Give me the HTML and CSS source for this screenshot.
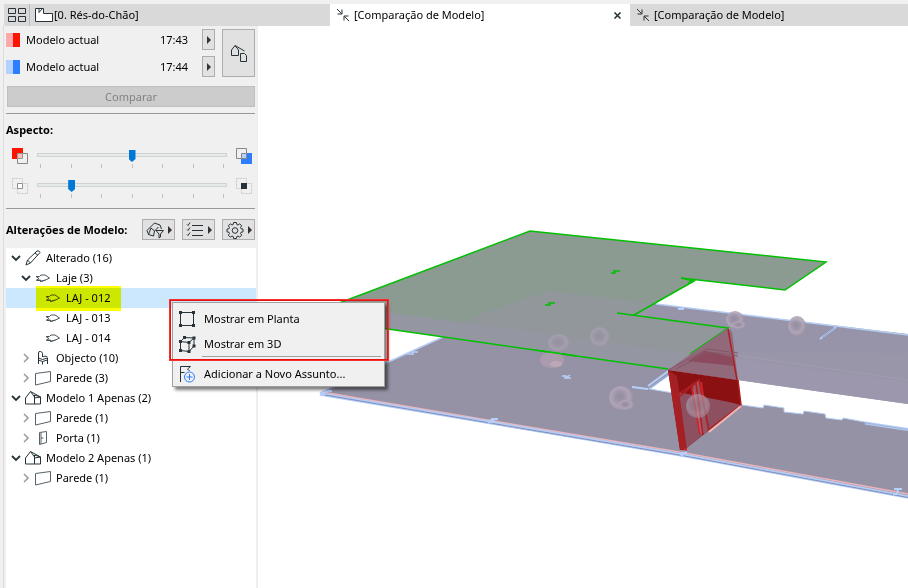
FILE: index.html
```html
<!DOCTYPE html>
<html lang="pt">
<head>
<meta charset="utf-8">
<title>Comparação de Modelo</title>
<link rel="stylesheet" href="styles.css">
</head>
<body>
<svg class="defs" width="0" height="0" aria-hidden="true">
  <defs>
    <symbol id="compress" viewBox="0 0 14 14"><path d="M1 1l4.500 4.500M6 1.500V6H1.500M13 13l-4.500-4.500M8 12.500V8h4.500"/></symbol>
    <symbol id="down" viewBox="0 0 12 12"><path d="M2 4l4 4 4-4" stroke-width="1.800"/></symbol>
    <symbol id="right" viewBox="0 0 12 12"><path d="M4 2l4 4-4 4" stroke="#999" stroke-width="1.500"/></symbol>
    <symbol id="pencil" viewBox="0 0 20 20"><path d="M4 17l1.500-5L15 3q2-1 3 1.500L8.500 15 4 17zM5.500 12l3 3M13 5l3 2.500"/></symbol>
    <symbol id="slab" viewBox="0 0 20 20"><path d="M4 8.500h3.500L9 7h4l4.500 3-4 2-5 1.500v-1.500H4.500L7 10.500z" stroke="#4a565c"/><path d="M4.500 12.500h4v1l5-1.500" stroke="#4a565c"/></symbol>
    <symbol id="chair" viewBox="0 0 20 20"><path d="M6.500 16V5q0-2 2-1.500t2 2V9M6.500 10l4 1.500 5-1.500v6M6.500 12l4 1.500v3M10.500 13.500L15.500 12M11 9l2-1 2.500 1"/></symbol>
    <symbol id="wall" viewBox="0 0 20 20"><path d="M3.500 5.500l15-2v10l-15 3.500z" stroke="#566268"/></symbol>
    <symbol id="door" viewBox="0 0 20 20"><path d="M7.500 4.500l7-1v11l-7 2zM9 4.500V16M9 10h2.500" stroke="#566268"/></symbol>
    <symbol id="house" viewBox="0 0 20 20"><path d="M3.500 16V10l5-6.500 4 5.500v7zM8.500 3.500L18.500 9v7h-6M12.500 10V7l6 2-6 1z"/></symbol>
    <radialGradient id="ball" cx="45%" cy="45%" r="60%"><stop offset="0" stop-color="#938b9f"/><stop offset=".35" stop-color="#a096aa"/><stop offset=".65" stop-color="#b3a7ba"/><stop offset="1" stop-color="#9a8d9e"/></radialGradient>
  </defs>
</svg>
<header class="tabs">
  <button class="grid" aria-label="Separadores"><svg width="20" height="16" viewBox="0 0 20 16"><path d="M1.500 1.500h7v5h-7zM11.500 1.500h7v5h-7zM1.500 9.500h7v5h-7zM11.500 9.500h7v5h-7z"/></svg></button>
  <button class="tab plan"><svg width="20" height="18" viewBox="0 0 20 18"><path d="M1.500 2.500h8v5h9v8h-17z" fill="#fff"/><path d="M5 2.500v4l3.500-4"/></svg>[0. Rés-do-Chão]</button>
  <div class="tab active"><svg width="14" height="14"><use href="#compress"/></svg><span>[Comparação de Modelo]</span><button class="close" aria-label="Fechar"><svg width="9" height="9" viewBox="0 0 9 9"><path d="M1.500 1.500l6 6M7.500 1.500l-6 6" stroke-width="1.600"/></svg></button></div>
  <button class="tab last"><svg width="14" height="14"><use href="#compress"/></svg>[Comparação de Modelo]</button>
</header>
<div class="workspace">
  <aside class="panel">
    <section class="models">
      <div class="model"><i class="swatch red"></i><span>Modelo actual</span><time>17:43</time><button class="btn small" aria-label="Escolher modelo 1"><i class="arrow"></i></button></div>
      <div class="model"><i class="swatch blue"></i><span>Modelo actual</span><time>17:44</time><button class="btn small" aria-label="Escolher modelo 2"><i class="arrow"></i></button></div>
      <button class="btn big" aria-label="Comparar modelos"><svg width="20" height="20" viewBox="0 0 20 20"><path d="M2.500 12.500V7L6 2.500 9.500 7v5.500zM6 2.500L15.500 8M11.500 18.500v-8h4l2 2v6z"/></svg></button>
    </section>
    <button class="btn compare" disabled>Comparar</button>
    <section class="aspect">
      <h2>Aspecto:</h2>
      <div class="slide">
        <svg width="16" height="16" viewBox="0 0 16 16"><path d="M0 0h11v11H0z" fill="#ff1200" stroke="none"/><path d="M5.500 5.500h10v10h-10z" fill="#f0f0f0" stroke="#888"/><path d="M5.500 5.500h5v5h-5z" fill="#f3c0bc" stroke="#999"/></svg>
        <div class="scale"><input type="range" min="0" max="6" value="3" aria-label="Equilíbrio entre modelos"><div class="ticks"><i></i><i></i><i></i><i></i><i></i><i></i><i></i></div></div>
        <svg width="16" height="16" viewBox="0 0 16 16"><path d="M5 5h11v11H5z" fill="#2d7dff" stroke="none"/><path d="M.500.500h10v10H.500z" fill="#f0f0f0" stroke="#888"/><path d="M5.500 5.500h5v5h-5z" fill="#b7d2fb" stroke="#888"/></svg>
      </div>
      <div class="slide">
        <svg width="16" height="16" viewBox="0 0 16 16"><path d="M.500.500h10v10H.500zM5.500 5.500h10v10h-10z" stroke="#c8c8c8" stroke-dasharray="2 1"/><path d="M5.500 5.500h5v5h-5z" fill="#fff" stroke="#8b9297"/></svg>
        <div class="scale"><input type="range" min="0" max="6" value="1" aria-label="Elementos sem alterações"><div class="ticks"><i></i><i></i><i></i><i></i><i></i><i></i><i></i></div></div>
        <svg width="16" height="16" viewBox="0 0 16 16"><path d="M.500.500h10v10H.500zM5.500 5.500h10v10h-10z" stroke="#c8c8c8" stroke-dasharray="2 1"/><path d="M5 5h6v6H5z" fill="#263238" stroke="none"/></svg>
      </div>
    </section>
    <div class="changes">
      <h2>Alterações de Modelo:</h2>
      <button class="btn tool" aria-label="Filtro"><svg width="20" height="18" viewBox="0 0 20 18"><path d="M3.500 13.500l-1.500-4L9.500 2 15 4l1.500 4M3.500 13.500l5 1.500 1-5-3.500-3M9.500 10l4-4M3.500 13.500L6 7M11 9.500h7.500l-3 3.500v3l-1.500 1v-4z"/></svg><i class="arrow"></i></button>
      <button class="btn tool" aria-label="Lista"><svg width="20" height="18" viewBox="0 0 20 18"><path d="M7 4.500h11M7 9.500h11M7 14.500h11M2 3.500l1 1 2-3M2 8.500l1 1 2-3M2 13.500l1 1 2-3"/></svg><i class="arrow"></i></button>
      <button class="btn tool" aria-label="Definições"><svg width="20" height="18" viewBox="0 0 20 18"><path d="M8.600 1.500h2.800l.4 2 1.200.5 1.700-1.200 2 2L15.500 6.500l.5 1.200 2 .4v2.800l-2 .4-.5 1.200 1.200 1.700-2 2L13 15l-1.200.5-.4 2H8.600l-.4-2L7 15l-1.700 1.200-2-2 1.200-1.700-.5-1.200-2-.4V8.100l2-.4.5-1.200-1.200-1.700 2-2L7 4l1.200-.5z"/><circle cx="10" cy="9.500" r="2.800"/></svg><i class="arrow"></i></button>
    </div>
    <ul class="tree">
      <li class="l1"><svg class="chev"><use href="#down"/></svg><svg class="ico"><use href="#pencil"/></svg>Alterado (16)</li>
      <li class="l2"><svg class="chev"><use href="#down"/></svg><svg class="ico"><use href="#slab"/></svg>Laje (3)</li>
      <li class="l3 selected"><svg class="ico"><use href="#slab"/></svg>LAJ - 012<i class="marker"></i></li>
      <li class="l3"><svg class="ico"><use href="#slab"/></svg>LAJ - 013</li>
      <li class="l3"><svg class="ico"><use href="#slab"/></svg>LAJ - 014</li>
      <li class="l2"><svg class="chev"><use href="#right"/></svg><svg class="ico"><use href="#chair"/></svg>Objecto (10)</li>
      <li class="l2"><svg class="chev"><use href="#right"/></svg><svg class="ico"><use href="#wall"/></svg>Parede (3)</li>
      <li class="l1"><svg class="chev"><use href="#down"/></svg><svg class="ico"><use href="#house"/></svg>Modelo 1 Apenas (2)</li>
      <li class="l2"><svg class="chev"><use href="#right"/></svg><svg class="ico"><use href="#wall"/></svg>Parede (1)</li>
      <li class="l2"><svg class="chev"><use href="#right"/></svg><svg class="ico"><use href="#door"/></svg>Porta (1)</li>
      <li class="l1"><svg class="chev"><use href="#down"/></svg><svg class="ico"><use href="#house"/></svg>Modelo 2 Apenas (1)</li>
      <li class="l2"><svg class="chev"><use href="#right"/></svg><svg class="ico"><use href="#wall"/></svg>Parede (1)</li>
    </ul>
  </aside>
  <main class="view">
    <svg class="scene" viewBox="258 26 650 562" preserveAspectRatio="xMinYMin slice" role="img" aria-label="Modelo 3D">
      <!-- lower slab -->
      <path d="M320 393L443 337 550 291 672 330 672 373 650 389 742 405 763 408 764 405 784 408 784 412 803 414 804 411 825 414 826 418 842 420 843 418 908 430V498L682 456 490 424z" fill="#9692a6"/>
      <path d="M650 389L742 405 763 408 764 405 784 408 784 412 803 414 804 411 825 414 826 418 842 420 843 418 908 430" stroke="#b5cdf5"/>
      <path d="M865 423L908 429.500" stroke="#b5cdf5" stroke-width="3"/>
      <path d="M865 423L908 429.500" stroke="#8fa3cb" stroke-width=".6"/>
      <path d="M320 393L443 337" stroke="#b5cdf5" stroke-width="1.500"/>
      <path d="M322 392L490 420.500 682 452.500 908 494" stroke="#eeb4b9" stroke-width="1.500"/>
      <path d="M320 394L490 422.500 682 455 908 497" stroke="#b5cdf5" stroke-width="3.500"/>
      <path d="M325 395L490 423 682 455.500 908 497.500" stroke="#7f8fbd"/>
      <path d="M320 394l8-3h4M488 423l4-4h6M494 420l-3 3M682 456l-1-2 6-2M684 452l-3 5M894 489h8M898 489l-1 5h-4" stroke="#b5d0fb" stroke-width="2"/>
      <!-- upper slab -->
      <path d="M550 291L656 304 908 335V404L738 380 668 370 600 350z" fill="#9a96aa"/>
      <path d="M656 304L728 313 908 334V353L690 352 617 340z" fill="#9793a8"/>
      <path d="M690 352L738 359 908 382V404L738 380 668 370z" fill="#9c97ac"/>
      <path d="M656 304L908 335" stroke="#b5cdf5" stroke-width="1.500"/>
      <path d="M735 355L908 380" stroke="#a19caf"/>
      <path d="M678 309h6M632 387l16 2M649 389L677 369M648 386L674 367M820 339L836 327" stroke="#b5d0fb" stroke-width="2"/>
      <path d="M650 388L675 370M822 338L834 328" stroke="#8f9abd"/>
      <!-- green slab -->
      <path d="M302 317L530 231 826 262 785 290 681 278 694 281 634 315 617 313 728 328 668 369 388 329z" fill="#8b9b92"/>
      <path d="M440 336L484 313 550 291 656 304 634 315 617 313 728 328 668 369z" fill="#91979b"/>
      <path d="M384 312L480 325 691 354 668 369 388 329z" fill="#9497a2"/>
      <path d="M388 329L302 317 530 231 826 262 785 290 681 278M694 281L634 315M617 313L728 328 690 354M388 329L668 369" stroke="#00c000" stroke-width="1.500"/>
      <path d="M681 278l13 3-6 2M611 273h4l-1-2h6M545 305h5l-1-2h6" stroke="#00c000" stroke-width="1.500"/>
      <path d="M562 376h4l-1 2h6M570 375l-4 3M407 354h6l-1-2h6" stroke="#b5d0fb" stroke-width="1.500"/>
      <!-- red wall -->
      <path d="M668 370L728 328 732 332 738 380z" fill="#91697b"/>
      <path d="M668 370L738 380 741 405 684 450 680 450z" fill="#8a1011"/>
      <path d="M673 391L729 402 741 405 684 450z" fill="#8c5060"/>
      <path d="M688 361L734 366 732 357 705 351z" fill="#8b4a5d"/>
      <path d="M668 370L677 376 687 450 680 450z" fill="#a22026"/>
      <path d="M692 384l7-4 8 52-5 4z" fill="#9b5564"/>
      <path d="M670 373L682 448M674 397L699 380 709 430M675 400L696 383 703 435M738 380L741 405 708 430M728 329L737 380" stroke="#b01e1f" stroke-width="1.500"/>
      <path d="M692 388L700 434M701 382L704 402" stroke="#d0242a" stroke-width="2"/>
      <path d="M694 390L701 433" stroke="#b66975"/>
      <path d="M741 406L709 432" stroke="#f2b5b5" stroke-width="2"/>
      <path d="M684 449l3 1" stroke="#d22" stroke-width="2"/>
      <path d="M668 370L707 349 738 353M676 369L709 352 738 356" stroke="#865568"/>
      <!-- fixtures -->
      <g fill="url(#ball)">
        <g opacity=".9"><circle cx="735" cy="320" r="9"/><ellipse cx="739" cy="325" rx="7" ry="4"/><ellipse cx="797" cy="326" rx="9" ry="10"/><circle cx="621" cy="398" r="12"/><ellipse cx="626" cy="405" rx="8" ry="5"/></g>
        <g opacity=".55"><ellipse cx="600" cy="337" rx="10" ry="10"/><ellipse cx="559" cy="343" rx="11" ry="9"/><ellipse cx="698" cy="406" rx="12" ry="12"/></g>
        <ellipse cx="552" cy="360" rx="12" ry="8" fill="#ab9cad"/><ellipse cx="556" cy="364" rx="6" ry="3" fill="#bda8b7"/>
      </g>
      <path d="M535 350L577 356" stroke="#00c000" stroke-width="1.500"/>
    </svg>
  </main>
</div>
<div class="menu" role="menu">
  <button role="menuitem"><svg width="18" height="18" viewBox="0 0 18 18"><path d="M2.500 2.500h13v13h-13z"/><path d="M1 1h3v3H1zM14 1h3v3h-3zM1 14h3v3H1zM14 14h3v3h-3z" class="solid"/></svg>Mostrar em Planta</button>
  <button role="menuitem"><svg width="18" height="18" viewBox="0 0 18 18"><path d="M2.500 6.500l8.500 1v9l-8.500-1zM2.500 6.500l4-4 9.500.5-5 4.500M16 3v8l-5 5.500"/><path d="M1 5h3v3H1zM9.500 6h3v3h-3zM9.500 15h3v3h-3zM1 14h3v3H1zM5 1h3v3H5zM14.500 1.500h3v3h-3zM14.500 9.500h3v3h-3z" class="solid"/></svg>Mostrar em 3D</button>
  <hr>
  <button role="menuitem"><svg width="18" height="18" viewBox="0 0 18 18"><path d="M2.500 17V1.500h10L9.500 4l2 2M2.500 7.500h4"/><circle cx="11.500" cy="12" r="5" stroke="#2d7dff" fill="#f0f0f0"/><path d="M11.500 9v6M8.500 12h6" stroke="#2d7dff"/></svg>Adicionar a Novo Assunto...</button>
  <i class="frame"></i>
</div>
</body>
</html>
```
FILE: styles.css
```css
* { box-sizing: border-box; }
html, body { height: 100%; }
body {
  margin: 0;
  padding: 4px 0 0 4px;
  display: flex;
  flex-direction: column;
  overflow: hidden;
  background: #f0f0f0;
  color: #000;
  font: 11px/20px "Noto Sans", "Open Sans", sans-serif;
}
button { font: inherit; color: inherit; margin: 0; padding: 0; border: 0; background: none; text-align: left; }
svg { display: block; flex: none; fill: none; stroke: #263238; }
.defs { position: absolute; }
h2 { margin: 0; font-size: 11px; line-height: 20px; font-weight: 700; }

.tabs { display: flex; flex: none; height: 22px; background: #d9d9d9; }
.grid { width: 26px; padding-left: 3px; border-right: 1px solid #bbb; }
.tab { display: flex; align-items: center; gap: 4px; padding-left: 6px; width: 300px; }
.plan { gap: 0; padding-left: 4px; }
.active { background: #fff; }
.active span { flex: 1; }
.last { flex: 1; }
.close { padding: 0 8px; }

.workspace { display: flex; flex: 1; min-height: 0; }
.panel { display: flex; flex-direction: column; flex: none; width: 255px; margin-left: -1px; padding: 3px 0 0 2px; border-left: 1px solid #ddd; border-right: 2px solid #eee; }
.models { display: grid; grid-template-columns: 1fr 33px; grid-template-rows: 21px 21px; gap: 6px 7px; padding-right: 1px; }
.model { display: flex; align-items: center; }
.model span { flex: 1; padding-left: 6px; }
.model time { padding-right: 14px; }
.swatch { width: 14px; height: 14px; }
.red { background: linear-gradient(90deg, #ffaaaa 50%, #ff1200 50%); }
.blue { background: linear-gradient(90deg, #b3d1ff 50%, #2d7dff 50%); }
.btn { display: flex; align-items: center; justify-content: center; border: 1px solid #adadad; background: #e1e1e1; }
.small { width: 13px; height: 21px; }
.big { grid-column: 2; grid-row: 1 / 3; }
.arrow { border-left: 4px solid #333; border-top: 4px solid transparent; border-bottom: 4px solid transparent; }
.compare { height: 21px; margin: 9px 1px 0; background: #ccc; border-color: #bfbfbf; color: #838383; }
.aspect { margin: 6px 1px 0 0; padding: 6px 0 8px; border-top: 1px solid #999; border-bottom: 1px solid #999; }
.slide { display: flex; justify-content: space-between; height: 30px; padding: 8px 3px 0 6px; }
.scale { flex: 1; margin: 0 9px; }
input[type=range] { display: block; -webkit-appearance: none; appearance: none; width: 100%; height: 12px; margin: 1px 0 3px; background: none; }
input[type=range]::-webkit-slider-runnable-track { height: 4px; border: 1px solid #d0d3d3; background: #e7eaea; }
input[type=range]::-webkit-slider-thumb { -webkit-appearance: none; width: 7px; height: 12px; margin-top: -4px; background: #0078d7; clip-path: polygon(0 0, 100% 0, 100% 75%, 50% 100%, 0 75%); }
.ticks { display: flex; justify-content: space-between; padding: 0 3px; }
.ticks i { width: 1px; height: 4px; background: #c0c0c0; }
.changes { display: flex; align-items: center; gap: 7px; padding: 10px 1px 8px 0; }
.changes h2 { flex: 1; white-space: nowrap; }
.tool { width: 33px; height: 21px; gap: 3px; }

.tree { flex: 1; margin: 0; padding: 0; list-style: none; background: #fff; }
.tree li { position: relative; display: flex; align-items: center; height: 20px; }
.chev { width: 12px; height: 12px; }
.ico { width: 20px; height: 20px; margin-right: 4px; }
.l1 { padding-left: 4px; }
.l2 { padding-left: 14px; }
.l3 { padding-left: 36px; }
.selected { background: #cce8ff; }
.marker { position: absolute; left: 30px; top: -2px; width: 85px; height: 25px; background: #ff0; mix-blend-mode: multiply; }

.view { flex: 1; min-width: 0; background: #fff; }
.scene { width: 100%; height: 100%; stroke: none; }

.menu { position: absolute; left: 172px; top: 302px; width: 213px; padding: 3px 3px 0; border: 1px solid #a0a0a0; background: #f0f0f0; box-shadow: 3px 3px 3px rgba(0, 0, 0, .5); }
.menu button { display: flex; align-items: center; gap: 8px; width: 100%; height: 25px; padding-left: 2px; }
.menu hr { margin: 0 0 4px 26px; border: 0; height: 1px; background: #a0a0a0; }
.solid { fill: #263238; stroke: none; }
.frame { position: absolute; left: -4px; top: -4px; width: 220px; height: 62px; border: 2px solid #e81010; outline: 1px solid rgba(255, 80, 80, .5); outline-offset: -1px; }
```
